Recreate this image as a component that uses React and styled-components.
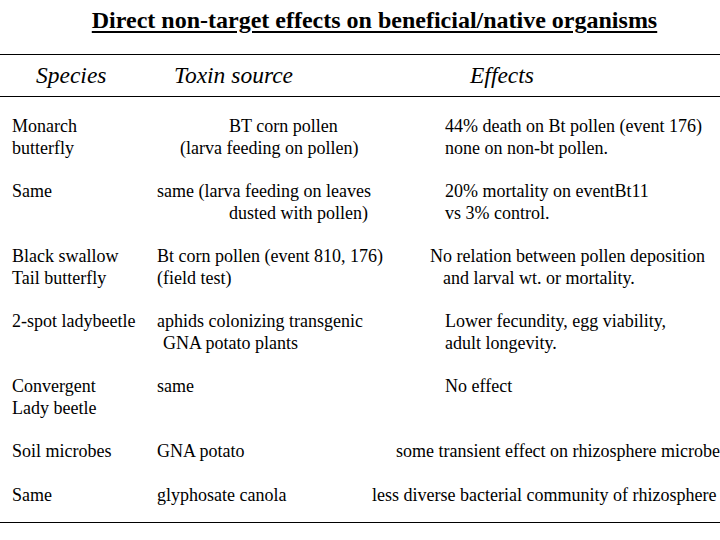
import styled, { createGlobalStyle } from 'styled-components';

const GlobalStyle = createGlobalStyle`
    html, body {
        margin: 0;
        padding: 0;
        background: #ffffff;
    }
    body {
        font-family: "Liberation Serif", "Times New Roman", "DejaVu Serif", serif;
        color: #000000;
        overflow: hidden;
    }
`;

const Slide = styled.div`
    width: 720px;
    height: 540px;
    overflow: hidden;
    background: #ffffff;
    font-family: "Liberation Serif", "Times New Roman", "DejaVu Serif", serif;
`;

const Title = styled.h1`
    margin: 0;
    padding: 6px 0 0 29px;
    height: 54px;
    box-sizing: border-box;
    text-align: center;
    font-size: 24px;
    line-height: 28px;
    font-weight: bold;
    text-decoration: underline;
    text-decoration-thickness: 2px;
    text-underline-offset: 3px;
`;

const Table = styled.div`
    border-top: 1px solid #000;
    border-bottom: 1px solid #000;
`;

const Row = styled.div`
    display: grid;
    grid-template-columns: 145px 288px 1fr;
    padding-left: 12px;
`;

const HeaderRow = styled(Row)`
    height: 41px;
    border-bottom: 1px solid #000;
    align-items: center;
    font-style: italic;
    font-size: 23.5px;
`;

const HeadCell = styled.div`
    margin-left: ${p => p.shift || 0}px;
    white-space: nowrap;
`;

const Body = styled.div`
    display: flex;
    flex-direction: column;
    gap: 22px;
    padding: 19px 0 16px;
`;

const Cell = styled.div`
    font-size: 18px;
    line-height: 21.5px;
`;

const Line = styled.div`
    white-space: nowrap;
    margin-left: ${p => p.shift || 0}px;
`;

const rows = [
    {
        species: ['Monarch', 'butterfly'],
        toxin: [['BT corn pollen', 72], ['(larva feeding on pollen)', 23]],
        effects: [['44% death on Bt pollen (event 176)', 0], ['none on non-bt pollen.', 0]],
    },
    {
        species: ['Same'],
        toxin: [['same (larva feeding on leaves', 0], ['dusted with pollen)', 72]],
        effects: [['20% mortality on eventBt11', 0], ['vs 3% control.', 0]],
    },
    {
        species: ['Black swallow', 'Tail butterfly'],
        toxin: [['Bt corn pollen (event 810, 176)', 0], ['(field test)', 0]],
        effects: [['No relation between pollen deposition', -15], ['and larval wt. or mortality.', -2]],
    },
    {
        species: ['2-spot ladybeetle'],
        toxin: [['aphids colonizing transgenic', 0], ['GNA potato plants', 6]],
        effects: [['Lower fecundity, egg viability,', 0], ['adult longevity.', 0]],
    },
    {
        species: ['Convergent', 'Lady beetle'],
        toxin: [['same', 0]],
        effects: [['No effect', 0]],
    },
    {
        species: ['Soil microbes'],
        toxin: [['GNA potato', 0]],
        effects: [['some transient effect on rhizosphere microbes', -49]],
    },
    {
        species: ['Same'],
        toxin: [['glyphosate canola', 0]],
        effects: [['less diverse bacterial community of rhizosphere', -73]],
    },
];

const App = () => (
    <Slide>
        <GlobalStyle />
        <Title>Direct non-target effects on beneficial/native organisms</Title>
        <Table>
            <HeaderRow>
                <HeadCell shift={24}>Species</HeadCell>
                <HeadCell shift={17}>Toxin source</HeadCell>
                <HeadCell shift={25}>Effects</HeadCell>
            </HeaderRow>
            <Body>
                {rows.map((row, i) => (
                    <Row key={i}>
                        <Cell>
                            {row.species.map(s => <Line key={s}>{s}</Line>)}
                        </Cell>
                        <Cell>
                            {row.toxin.map(([t, shift]) => <Line key={t} shift={shift}>{t}</Line>)}
                        </Cell>
                        <Cell>
                            {row.effects.map(([t, shift]) => <Line key={t} shift={shift}>{t}</Line>)}
                        </Cell>
                    </Row>
                ))}
            </Body>
        </Table>
    </Slide>
);

export default App;
